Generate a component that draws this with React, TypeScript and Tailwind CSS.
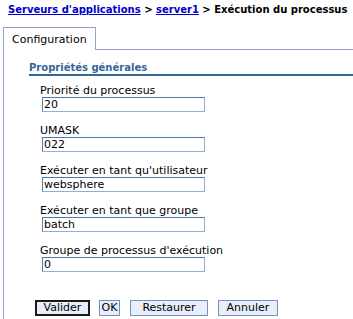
const fields = [
  { label: 'Priorité du processus', value: '20' },
  { label: 'UMASK', value: '022' },
  { label: "Exécuter en tant qu'utilisateur", value: 'websphere' },
  { label: 'Exécuter en tant que groupe', value: 'batch' },
  { label: "Groupe de processus d'exécution", value: '0' },
];

export default function App() {
  return (
    <div className="w-[353px] h-[319px] bg-white overflow-hidden text-[11px] text-black font-['DejaVu_Sans',Verdana,sans-serif]">
      {/* Breadcrumb */}
      <div className="pl-[8px] pt-[3px] h-[27px] text-[10px] font-bold leading-[14px] whitespace-nowrap">
        <a href="#" className="text-[#0000cc] underline">Serveurs d'applications</a>
        <span> &gt; </span>
        <a href="#" className="text-[#0000cc] underline">server1</a>
        <span> &gt; Exécution du processus</span>
      </div>

      {/* Tabs */}
      <div className="flex pl-[3px]">
        <div className="w-[93px] h-[23px] border border-b-0 border-[#8fa5cc] pl-[8px] pt-[5px] leading-[13px]">
          Configuration
        </div>
        <div className="flex-1 border-b border-[#8fa5cc]" />
      </div>

      {/* Content */}
      <div className="ml-[3px] border-l border-[#8fa5cc] h-[300px] pl-[25px] pt-[12px]">
        <div className="border-b-2 border-[#336699] text-[#336699] text-[10px] font-bold leading-[12px]">
          Propriétés générales
        </div>
        <div className="pl-[11px] pt-[9px] flex flex-col gap-[13px]">
          {fields.map((f) => (
            <div key={f.label} className="flex flex-col">
              <label className="leading-[12px] whitespace-nowrap">{f.label}</label>
              <input
                readOnly
                value={f.value}
                className="ml-[2px] w-[163px] h-[15px] border border-[#8fb0d6] border-t-[#4f78a8] border-l-[#5b80b0] px-[1px] text-[11px] leading-[13px] text-black outline-none font-['DejaVu_Sans',Verdana,sans-serif]"
              />
            </div>
          ))}
        </div>
        <div className="flex gap-[9px] pl-[6px] pt-[28px]">
          <button className="h-[16px] w-[55px] flex items-center justify-center border-2 border-[#1a1a1a] bg-[#e8effb] leading-[12px]">Valider</button>
          <button className="h-[16px] w-[21px] flex items-center justify-center border border-[#6f90c0] bg-[#e8effb] leading-[12px]">OK</button>
          <button className="h-[16px] w-[78px] ml-[1px] flex items-center justify-center border border-[#6f90c0] bg-[#e8effb] leading-[12px]">Restaurer</button>
          <button className="h-[16px] w-[60px] ml-[1px] flex items-center justify-center border border-[#6f90c0] bg-[#e8effb] leading-[12px]">Annuler</button>
        </div>
      </div>
    </div>
  );
}
